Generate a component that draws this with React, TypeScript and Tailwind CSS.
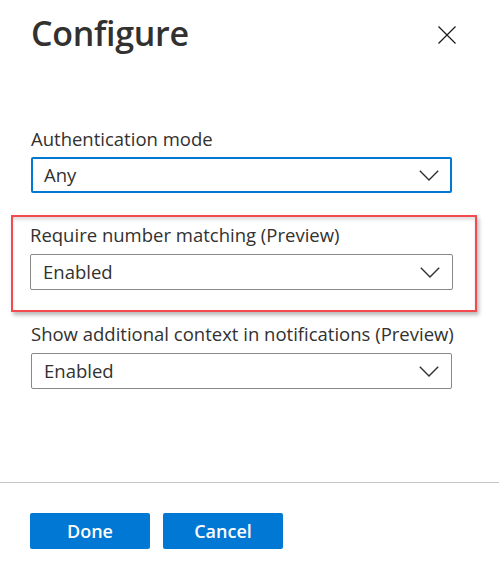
import type { ReactNode } from "react";

const fontStack = { fontFamily: '"Open Sans", "Noto Sans", Arial, sans-serif' };

const Chevron = () => (
    <svg width="20" height="11" viewBox="0 0 20 11" fill="none">
        <path d="M0.8 0.8 L10 10 L19.2 0.8" stroke="#323130" strokeWidth="1.4" />
    </svg>
);

const CloseIcon = () => (
    <svg width="18" height="18" viewBox="0 0 18 18" fill="none">
        <path d="M0.5 0.5 L17.5 17.5 M17.5 0.5 L0.5 17.5" stroke="#1b1a19" strokeWidth="1.2" />
    </svg>
);

type FieldProps = {
    label: string;
    value: string;
    focused?: boolean;
};

const Field = ({ label, value, focused }: FieldProps) => (
    <div className="flex flex-col">
        <label className="h-6 text-[18.5px] leading-6 text-[#323130] whitespace-nowrap">{label}</label>
        <div
            className={
                focused
                    ? "mt-[6px] flex h-[36px] items-center justify-between rounded-[2px] border-2 border-[#0078d4] pl-[11px] pr-[11px]"
                    : "mt-[7px] flex h-[36px] items-center justify-between rounded-[2px] border border-[#8a8886] pl-[12px] pr-[12px]"
            }
        >
            <span className="text-[18.5px] text-[#323130]">{value}</span>
            <Chevron />
        </div>
    </div>
);

const Highlight = ({ children }: { children: ReactNode }) => (
    <div className="-ml-[20px] -mr-[25px] border-[2.5px] border-[#f24a4f] pt-[6px] pb-[20px] pl-[17px] pr-[22px] shadow-[2px_3px_4px_rgba(0,0,0,0.28),inset_0_3px_3px_rgba(0,0,0,0.12)]">
        {children}
    </div>
);

export default function App() {
    return (
        <div className="min-h-[572px] w-[499px] bg-white text-[#323130]" style={fontStack}>
            <div className="flex items-start justify-between pl-[31px] pr-[43px] pt-[10px]">
                <h1 className="text-[34px] font-semibold leading-[46px] tracking-[-0.3px] text-[#323130]">Configure</h1>
                <div className="mt-[16px]">
                    <CloseIcon />
                </div>
            </div>

            <div className="mt-[71px] flex flex-col pl-[31px] pr-[47px]">
                <Field label="Authentication mode" value="Any" focused />
                <div className="mt-[22px]">
                    <Highlight>
                        <Field label="Require number matching (Preview)" value="Enabled" />
                    </Highlight>
                </div>
                <div className="mt-[10px]">
                    <Field label="Show additional context in notifications (Preview)" value="Enabled" />
                </div>
            </div>

            <div className="mt-[93px] h-px w-full bg-[#c4c4c4]" />

            <div className="flex gap-[13px] pl-[30px] pt-[30px]">
                <button className="h-[36px] w-[120px] rounded-[2px] bg-[#0078d4] text-[18px] font-semibold text-white">
                    Done
                </button>
                <button className="h-[36px] w-[120px] rounded-[2px] bg-[#0078d4] text-[18px] font-semibold text-white">
                    Cancel
                </button>
            </div>
        </div>
    );
}
